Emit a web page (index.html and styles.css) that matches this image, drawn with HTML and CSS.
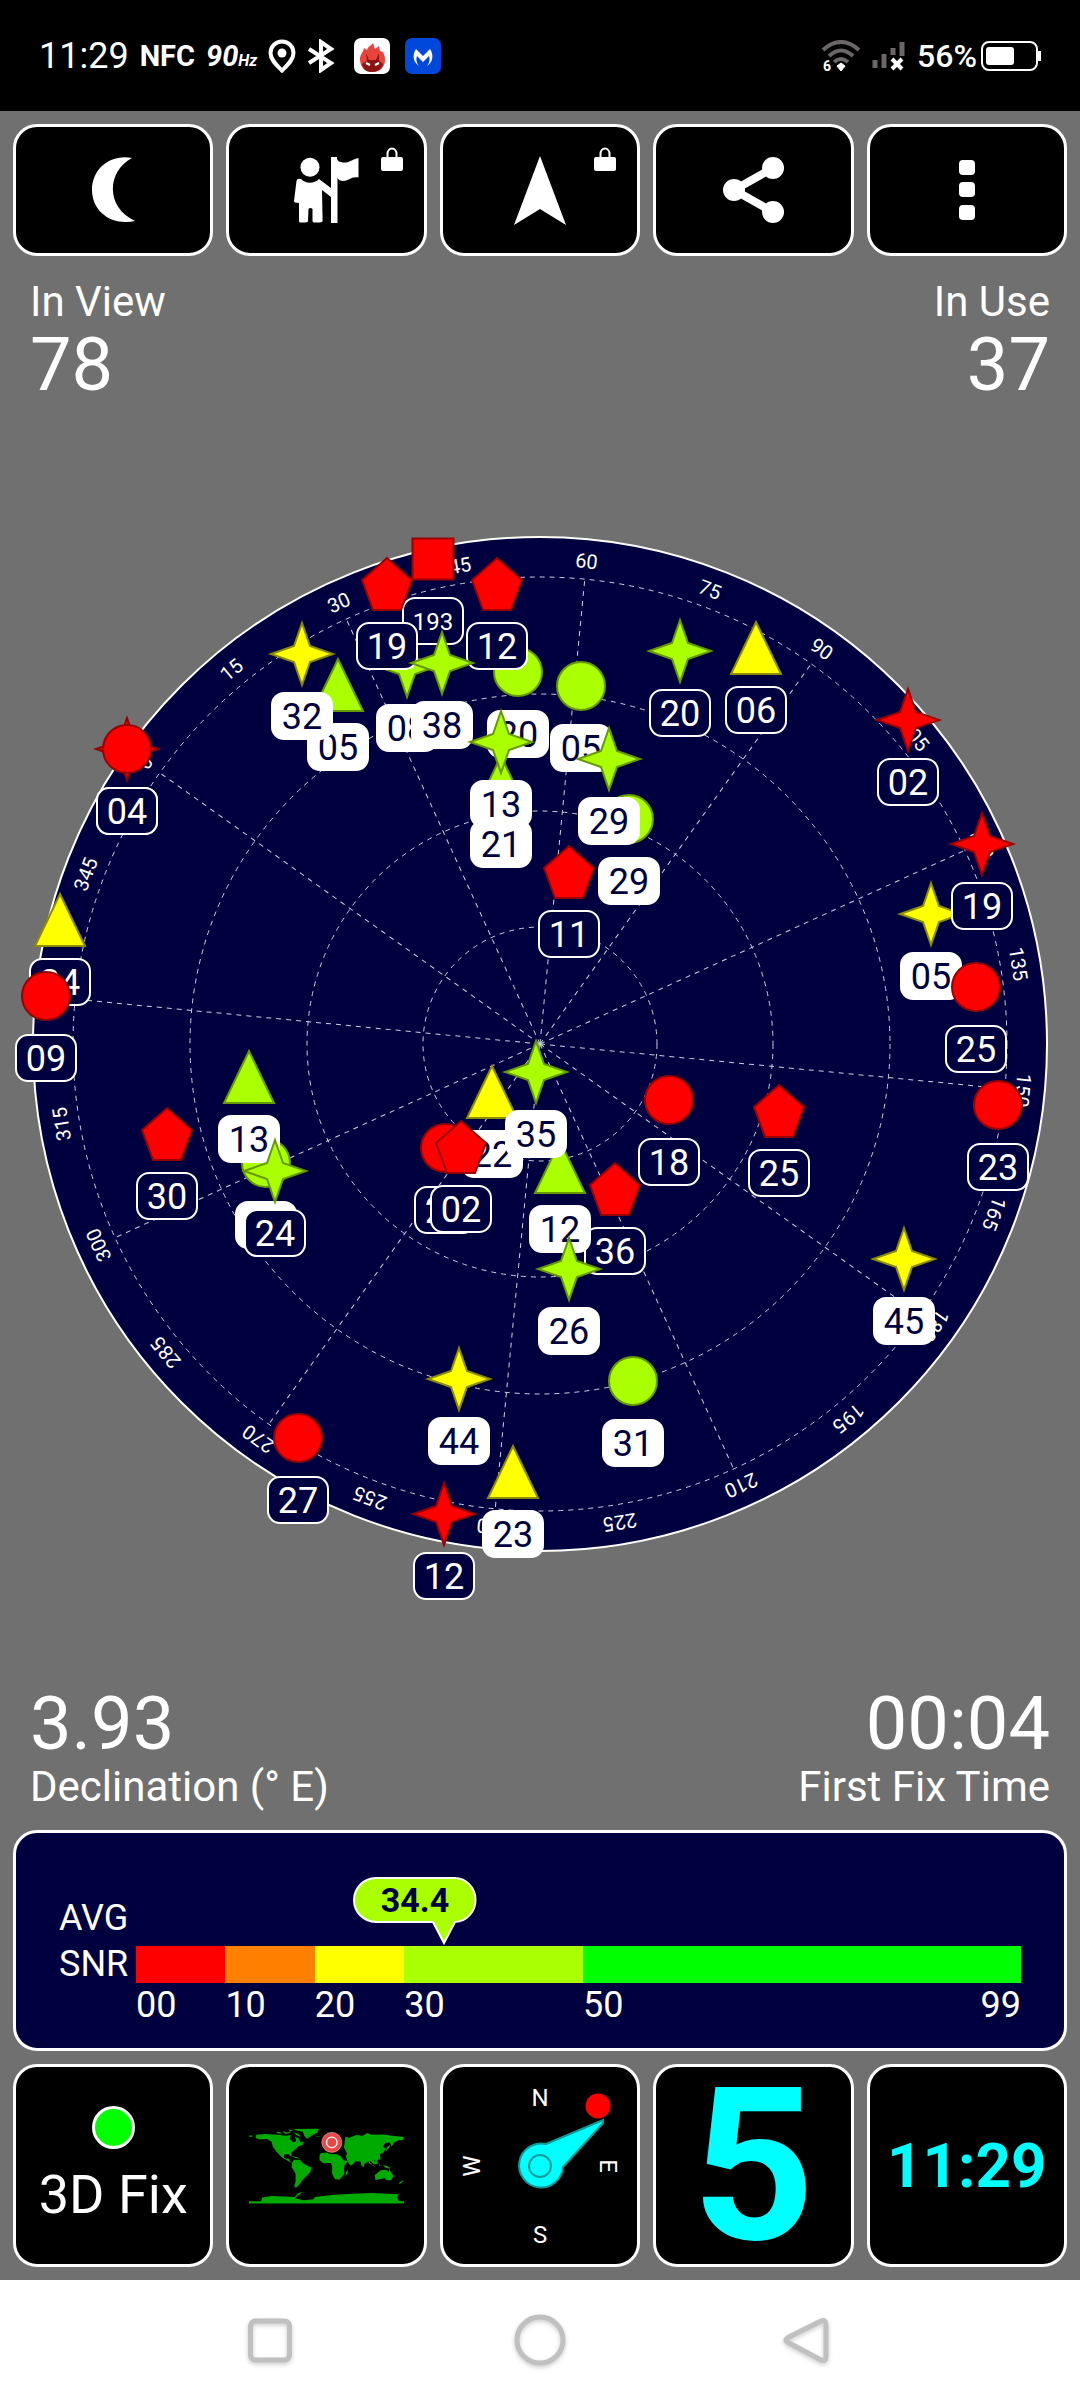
FILE: index.html
```html
<!DOCTYPE html>
<html lang="en">
<head>
    <meta charset="UTF-8">
    <meta name="viewport" content="width=device-width, initial-scale=1.0">
    <title>GPS Status</title>
    <link rel="stylesheet" href="styles.css">
</head>
<body>
    <header class="status-bar">
        <div class="status-group">
            <span class="clock">11:29</span>
            <span class="nfc">NFC</span>
            <span class="refresh">90<small>Hz</small></span>
            <svg class="status-icon" width="28" height="34" viewBox="0 0 28 34">
                <path d="M14 2.500C7.500 2.500 2.500 7.500 2.500 14c0 7 6.500 12.500 11.500 17.500 5-5 11.500-10.500 11.500-17.500C25.500 7.500 20.500 2.500 14 2.500Z" fill="none" stroke="#fff" stroke-width="4"/>
                <circle cx="14" cy="14" r="4.500" fill="#fff"/>
            </svg>
            <svg class="status-icon" width="28" height="34" viewBox="0 0 28 34">
                <path d="M2 10l22 14-10 7V3l10 7L2 24" fill="none" stroke="#fff" stroke-width="4"/>
            </svg>
            <svg class="app-badge" width="36" height="36" viewBox="0 0 36 36">
                <rect width="36" height="36" rx="7" fill="#fff"/>
                <path d="M18 34C10 34 6 28 6 21c0-5 3-6 4-11l3 2c1-4 4-4 6-7l2 6 4-3 1 5 3 1c2 4 2 5 2 8 0 7-5 12-13 12Z" fill="#e8443c"/>
                <path d="M12 15l3 7h7l3-7v8l4 3c-1 5-5 8-11 8S9 31 8 26l5-3Z" fill="#8a1512"/>
                <path d="M12 25l4 2M25 25l-4 2" stroke="#fff" stroke-width="2"/>
            </svg>
            <svg class="app-badge" width="36" height="36" viewBox="0 0 36 36">
                <rect width="36" height="36" rx="7" fill="#0048dc"/>
                <path d="M14 28C8 24 7 17 11 11l7 7 7-7c4 6 3 13-3 17 3-4 3-7 2-10l-6 6-6-6c-1 3-1 6 2 10Z" fill="#fff"/>
            </svg>
        </div>
        <div class="status-group">
            <svg width="40" height="32" viewBox="0 0 40 32">
                <path d="M2 10Q20-6 38 10M8 16Q20 5 32 16M13 22Q20 16 27 22" fill="none" stroke="#6b6668" stroke-width="4"/>
                <path d="M20 23l4 3-4 5-4-5Z" fill="#fff" stroke="#fff"/>
                <text class="wifi-gen" x="2" y="31">6</text>
            </svg>
            <svg width="34" height="30" viewBox="0 0 34 30">
                <path d="M3 19v8M12 13v14M21 7v7M30 1v14" stroke="#6b6668" stroke-width="5"/>
                <path d="M20 18l10 10M30 18L20 28" stroke="#fff" stroke-width="4"/>
            </svg>
            <span class="battery">56%
                <svg width="60" height="30" viewBox="0 0 60 30">
                    <rect x="1" y="1" width="55" height="28" rx="7" fill="none" stroke="#fff" stroke-width="2"/>
                    <rect x="5" y="6" width="28" height="18" rx="3" fill="#fff"/>
                    <rect x="57" y="10" width="3" height="10" fill="#fff"/>
                </svg>
            </span>
        </div>
    </header>

    <main class="app">
        <div class="tiles toolbar">
            <button class="tile" aria-label="Night mode">
                <svg width="43" height="66" viewBox="0 0 43 66"><path d="M40 1C18-3 0 12 0 33c0 22 20 36 43 31C14 51 14 15 40 1Z"/></svg>
            </button>
            <button class="tile" aria-label="Waypoints">
                <svg width="65" height="66" viewBox="0 0 65 66">
                    <circle cx="16" cy="10.300" r="9.500"/>
                    <path d="M2.500 24Q3 21 7 22C12 27 20 27 25 22L37 31V40L28 33 28.600 64Q28 66 20 65.500 18.500 65 18.500 64V52Q16.500 50 14.500 52L14 64Q14 66 6 65.500 5 65 5 64V46L1 45.500Q0 45 0 44Z"/>
                    <path d="M37 0H43V2Q44 5 49 5.500C56 6 59 2 64.500 1V20.500C57 19 55 24 49 24Q45 24 43.500 21V66H37Z"/>
                </svg>
                <svg class="lock" width="22" height="24" viewBox="0 0 22 24"><path d="M6.500 11V7a4.500 5.500 0 0 1 9 0v4" fill="none" stroke="#fff" stroke-width="2"/><rect y="10" width="22" height="14" rx="2"/></svg>
            </button>
            <button class="tile" aria-label="Navigate">
                <svg width="52" height="69" viewBox="0 0 52 69"><path d="M26 0L52 69 26 53 0 69Z"/></svg>
                <svg class="lock" width="22" height="24" viewBox="0 0 22 24"><path d="M6.500 11V7a4.500 5.500 0 0 1 9 0v4" fill="none" stroke="#fff" stroke-width="2"/><rect y="10" width="22" height="14" rx="2"/></svg>
            </button>
            <button class="tile" aria-label="Share">
                <svg width="61" height="66" viewBox="0 0 61 66">
                    <path d="M50 11L11 33l39 22" fill="none" stroke="#fff" stroke-width="8"/>
                    <circle cx="11" cy="33" r="11"/><circle cx="50" cy="11" r="11"/><circle cx="50" cy="55" r="11"/>
                </svg>
            </button>
            <button class="tile" aria-label="Menu">
                <svg width="16" height="60" viewBox="0 0 16 60"><rect width="16" height="15" rx="4"/><rect y="22" width="16" height="15" rx="4"/><rect y="45" width="16" height="15" rx="4"/></svg>
            </button>
        </div>

        <div class="stats stats-top">
            <div class="stat">
                <span class="stat-label">In View</span>
                <span class="stat-value">78</span>
            </div>
            <div class="stat stat-right">
                <span class="stat-label">In Use</span>
                <span class="stat-value">37</span>
            </div>
        </div>

        <!-- Sky plot, filled in by sky.js -->
        <div class="sky">
            <svg class="sky-plot" viewBox="0 1 1080 1120" role="img" aria-label="Satellite positions">
                <defs>
                    <circle id="circle" r="24"/>
                    <path id="star" d="M0-31L8-8 31 0 8 8 0 31-8 8-31 0-8-8Z"/>
                    <path id="triangle" d="M0-26L25 26H-25Z"/>
                    <path id="pentagon" d="M0-26L25-4 14 26H-14L-25-4Z"/>
                    <path id="square" d="M-20.500-20.500H20.500V20.500H-20.500Z"/>
                </defs>
                <circle class="dial" cx="540" cy="560" r="507"/>
                <g id="grid" transform="translate(540 560)"></g>
                <g id="sats"></g>
            </svg>
        </div>

        <div class="stats">
            <div class="stat">
                <span class="stat-value">3.93</span>
                <span class="stat-label">Declination (° E)</span>
            </div>
            <div class="stat stat-right">
                <span class="stat-value">00:04</span>
                <span class="stat-label">First Fix Time</span>
            </div>
        </div>

        <section class="snr">
            <span class="snr-name">AVG</span>
            <div></div>
            <span class="snr-name">SNR</span>
            <div class="snr-bar">
                <i class="poor"></i><i class="weak"></i><i class="fair"></i><i class="good"></i><i class="best"></i>
                <svg class="snr-bubble" style="left: 34.75%" width="126" height="70" viewBox="0 0 126 70">
                    <path d="M24 2H102A21 22 0 0 1 103 46L92 67 81 46H24A22 22 0 0 1 24 2Z" fill="#aaff00" stroke="#fff" stroke-width="2"/>
                    <text x="63" y="36">34.4</text>
                </svg>
            </div>
            <div></div>
            <div class="snr-scale">
                <span>00</span><span>10</span><span>20</span><span>30</span><span class="scale-end"><b>50</b><b>99</b></span>
            </div>
        </section>

        <div class="tiles widgets">
            <button class="tile fix">
                <span class="fix-dot"></span>
                <span>3D Fix</span>
            </button>
            <button class="tile" aria-label="Map">
                <svg class="map" width="155" height="76" viewBox="12 11 466 228">
                    <path fill="#00aa00" d="M12 33h10v4H12ZM34 31L60 29 100 31 122 34 138 32 134 44 146 54 154 50 150 38 160 40 166 52 176 60 160 66 148 78 140 84 140 98 132 90 118 90 116 98 124 104 130 102 138 114 146 118 140 116 112 100 96 84 84 68 80 52 66 44 44 45 32 41ZM145 14L222 13 218 24 200 34 186 43 178 34 174 22 160 20ZM96 22l12 2v4l-14-2ZM112 20l14 4 10-2v4l-14 3ZM130 15l14 2-8 4ZM146 24l14 4 8 10-14-6ZM170 50l8 5-8 4ZM138 96l16 2 12 5-14-2ZM214 36h10v2h-10Z"/>
                    <path fill="#00aa00" d="M148 106L164 106 176 118 200 130 196 144 184 156 172 168 164 180 154 190 148 188 152 170 152 148 140 128 142 114ZM228 86L262 84 286 94 296 108 309 110 298 126 298 150 284 166 270 164 262 148 262 126 258 116 236 117 224 108 224 94ZM304 142l6-5-2 12-6 6Z"/>
                    <path fill="#00aa00" d="M296 66l4-18 2-10 12 2 20-8 20 2 14-8 12 5 34-1 22 3 41 5v8l-18 2-10 6-8 12-6-12-14 2-6 10 8 8-8 12-10 4 2 10-10 10-10-2 6 14-8-4-8-8-8 2-10 6-2 10-6-2-4-14-16-2-2 6-12 8-8-12-6-16 4-8ZM426 70l10-10-2 10-10 10ZM370 106l12 16 12 4h-8l-14-10ZM386 112l10-4 4 10-10 2ZM402 98l6 8-4 2ZM404 116l4 10-4-1ZM414 122l14 3 10 8-14-2ZM390 152L408 138 424 136 432 142 434 134 446 154 440 168 426 168 420 162 392 167ZM462 177l12-9v4l-8 7Z"/>
                    <path fill="#00aa00" d="M12 231H48L52 220 80 215 150 218 160 206 174 203 160 214 150 222 176 228 206 225 210 218 260 212 310 209 380 206 462 210 458 218 462 230 478 231V238H12Z"/>
                    <circle cx="265" cy="56" r="34"/>
                    <circle cx="261" cy="54" r="30" fill="#e84848" stroke="#f0a8a0" stroke-width="2"/>
                    <circle cx="261" cy="54" r="16" fill="none" stroke="#fff" stroke-width="4"/>
                </svg>
            </button>
            <button class="tile" aria-label="Compass">
                <svg class="compass" width="190" height="190" viewBox="-95 -95 190 190">
                    <text y="-60">N</text>
                    <text transform="rotate(90)" y="-60">E</text>
                    <text y="77">S</text>
                    <text transform="rotate(-90)" y="-60">W</text>
                    <path d="M6-22L63-46V-43L23 1A22 22 0 1 1 6-22Z" fill="#0ff" stroke="#0a9a9a" stroke-width="2"/>
                    <circle r="11" fill="#0ff" stroke="#0a9a9a" stroke-width="2"/>
                    <circle cx="58" cy="-60" r="12.500" fill="#f00"/>
                </svg>
            </button>
            <button class="tile speed">5</button>
            <button class="tile time">11:29</button>
        </div>
    </main>

    <nav class="nav-bar">
        <button aria-label="Recent apps"><svg width="54" height="60" viewBox="0 0 54 60"><rect x="7.500" y="11" width="39" height="39" rx="5"/></svg></button>
        <button aria-label="Home"><svg width="54" height="60" viewBox="0 0 54 60"><circle cx="27" cy="30" r="23"/></svg></button>
        <button aria-label="Back"><svg width="54" height="60" viewBox="0 0 54 60"><path d="M38 11L6 27Q0 30 6 33L38 50Q43 52 43 46V15Q43 9 38 11Z"/></svg></button>
    </nav>

    <script src="sky.js"></script>
</body>
</html>
```
FILE: sky.js
```js
const NS = "http://www.w3.org/2000/svg";
const HEADING = 54.5;

// [shape, signal, x, y, id, used in fix], lowest first
const satellites = [
    ["star", "lime", 407, 182, "08", true],
    ["square", "red", 433, 75, "193", false],
    ["pentagon", "red", 387, 100, "19", false],
    ["circle", "lime", 518, 188, "20", true],
    ["pentagon", "red", 497, 100, "12", false],
    ["triangle", "lime", 338, 201, "05", true],
    ["star", "yellow", 302, 170, "32", true],
    ["star", "lime", 442, 179, "38", true],
    ["triangle", "lime", 501, 298, "21", true],
    ["star", "lime", 501, 258, "13", true],
    ["star", "red", 127, 265, "04", false],
    ["circle", "red", 127, 265, "04", false],
    ["triangle", "yellow", 60, 436, "24", false],
    ["circle", "red", 46, 512, "09", false],
    ["circle", "lime", 581, 202, "05", true],
    ["star", "lime", 680, 167, "20", false],
    ["triangle", "yellow", 756, 164, "06", false],
    ["circle", "lime", 629, 335, "29", true],
    ["star", "lime", 609, 275, "29", true],
    ["pentagon", "red", 569, 388, "11", false],
    ["star", "red", 908, 236, "02", false],
    ["star", "yellow", 931, 430, "05", true],
    ["star", "red", 982, 360, "19", false],
    ["circle", "red", 976, 503, "25", false],
    ["circle", "red", 998, 621, "23", false],
    ["circle", "lime", 266, 679, "31", true],
    ["triangle", "lime", 249, 593, "13", true],
    ["star", "lime", 275, 687, "24", false],
    ["pentagon", "red", 167, 650, "30", false],
    ["triangle", "yellow", 492, 608, "22", true],
    ["circle", "red", 445, 664, "28", false],
    ["pentagon", "red", 461, 663, "02", false],
    ["pentagon", "red", 615, 705, "36", false],
    ["triangle", "lime", 560, 683, "12", true],
    ["star", "lime", 536, 588, "35", true],
    ["star", "lime", 569, 785, "26", true],
    ["circle", "red", 669, 616, "18", false],
    ["pentagon", "red", 779, 627, "25", false],
    ["star", "yellow", 904, 775, "45", true],
    ["circle", "lime", 633, 897, "31", true],
    ["star", "yellow", 459, 895, "44", true],
    ["circle", "red", 298, 954, "27", false],
    ["star", "red", 444, 1030, "12", false],
    ["triangle", "yellow", 513, 988, "23", true]
];

function add(parent, tag, attrs, text) {
    const el = document.createElementNS(NS, tag);
    for (const key in attrs) el.setAttribute(key, attrs[key]);
    if (text) el.textContent = text;
    parent.appendChild(el);
    return el;
}

function drawGrid() {
    const grid = document.getElementById("grid");
    [117, 233, 350, 467].forEach(r => add(grid, "circle", { class: "ring", r }));

    for (let az = 0; az < 360; az += 15) {
        const g = add(grid, "g", { transform: `rotate(${az - HEADING})` });
        if (az % 30 === 0) add(g, "path", { class: "spoke", d: "M0 0V-467" });
        add(g, "text", { class: "azimuth", y: -478 }, String(az));
    }
}

function drawSatellites() {
    const layer = document.getElementById("sats");
    satellites.forEach(([shape, signal, x, y, id, used]) => {
        const g = add(layer, "g", {
            class: `sat ${signal} ${used ? "used" : ""}`,
            transform: `translate(${x} ${y})`
        });
        add(g, "use", { href: "#" + shape });
        add(g, "rect", { x: -30, y: 39, width: 60, height: 46, rx: 12 });
        add(g, "text", { class: id.length > 2 ? "small" : "", y: id.length > 2 ? 71 : 75 }, id);
    });
}

drawGrid();
drawSatellites();
```
FILE: styles.css
```css
:root {
    --background: #707070;
    --navy: #000040;
    --cyan: #00ffff;
    --gap: 13px;
}

* {
    box-sizing: border-box;
}

body {
    margin: 0;
    min-height: 100vh;
    display: flex;
    flex-direction: column;
    background: var(--background);
    color: #fff;
    font-family: Roboto, "Liberation Sans", sans-serif;
    font-size: 36px;
}

button {
    font-family: inherit;
    color: inherit;
    cursor: pointer;
}

svg {
    display: block;
    flex: none;
}

/* Status bar */
.status-bar {
    display: flex;
    justify-content: space-between;
    align-items: center;
    height: 111px;
    padding: 0 39px;
    background: #000;
}

.status-group {
    display: flex;
    align-items: center;
    gap: 11px;
}

.nfc {
    font-size: 29px;
    font-weight: 700;
}

.refresh {
    font-size: 29px;
    font-weight: 700;
    font-style: italic;
}

.refresh small {
    font-size: 16px;
}

.app-badge {
    margin-left: 4px;
}

.status-icon + .app-badge {
    margin-left: 8px;
}

.wifi-gen {
    fill: #fff;
    font-size: 14px;
    font-weight: 700;
}

.battery {
    display: flex;
    align-items: center;
    gap: 4px;
    font-size: 32px;
    font-weight: 500;
}

/* Main screen */
.app {
    flex: 1;
    display: flex;
    flex-direction: column;
    padding: var(--gap);
}

.tiles {
    display: grid;
    grid-template-columns: repeat(5, 1fr);
    gap: var(--gap);
}

.tile {
    position: relative;
    display: flex;
    align-items: center;
    justify-content: center;
    min-width: 0;
    padding: 0;
    background: #000;
    border: 3px solid #fff;
    border-radius: 24px;
}

.toolbar .tile {
    height: 132px;
}

.toolbar svg {
    fill: #fff;
}

.lock {
    position: absolute;
    top: 20px;
    right: 21px;
}

.stats {
    display: flex;
    justify-content: space-between;
    padding: 0 17px;
}

.stats-top {
    margin-top: 20px;
}

.stat {
    display: flex;
    flex-direction: column;
}

.stat-right {
    text-align: right;
}

.stat-label {
    font-size: 42px;
    line-height: 52px;
}

.stat-value {
    font-size: 74px;
    line-height: 74px;
}

/* Sky plot */
.sky {
    flex: 1;
    display: flex;
    align-items: center;
    margin: 0 -13px;
}

.sky-plot {
    width: 100%;
    flex: auto;
    overflow: visible;
}

.dial {
    fill: var(--navy);
    stroke: #fff;
    stroke-width: 2;
}

.ring,
.spoke {
    fill: none;
    stroke: #d0d0e0;
    stroke-dasharray: 5 5;
}

.azimuth {
    fill: #fff;
    font-size: 20px;
    text-anchor: middle;
}

.sat use {
    stroke-width: 2;
}

.red use {
    fill: #ff0000;
    stroke: #990000;
}

.yellow use {
    fill: #ffff00;
    stroke: #8c8c00;
}

.lime use {
    fill: #aaff00;
    stroke: #669900;
}

.sat rect {
    fill: var(--navy);
    stroke: #fff;
    stroke-width: 2;
}

.sat text {
    fill: #fff;
    font-size: 36px;
    text-anchor: middle;
}

.sat .small {
    font-size: 24px;
}

.used rect {
    fill: #fff;
}

.used text {
    fill: var(--navy);
}

/* Average signal to noise ratio */
.snr {
    display: grid;
    grid-template-columns: 77px 1fr;
    grid-template-rows: 46px 46px 36px;
    align-items: center;
    margin: 17px 0 var(--gap);
    padding: 62px 43px 25px;
    background: var(--navy);
    border: 3px solid #fff;
    border-radius: 24px;
}

.snr-name {
    line-height: 46px;
}

.snr-bar,
.snr-scale {
    position: relative;
    display: grid;
    grid-template-columns: 10fr 10fr 10fr 20fr 49fr;
}

.snr-bar {
    height: 37px;
}

.snr-scale {
    line-height: 36px;
}

.scale-end {
    display: flex;
    justify-content: space-between;
}

.scale-end b {
    font-weight: 400;
}

.poor { background: #ff0000; }
.weak { background: #ff8000; }
.fair { background: #ffff00; }
.good { background: #aaff00; }
.best { background: #00ff00; }

.snr-bubble {
    position: absolute;
    bottom: 100%;
    margin-left: -92px;
}

.snr-bubble text {
    fill: var(--navy);
    font-size: 34px;
    font-weight: 700;
    text-anchor: middle;
}

/* Bottom widgets */
.widgets .tile {
    height: 203px;
}

.fix {
    flex-direction: column;
    gap: 16px;
    font-size: 54px;
    line-height: 60px;
}

.fix-dot {
    width: 43px;
    height: 43px;
    background: #00ff00;
    border: 3px solid #fff;
    border-radius: 50%;
}

.compass text {
    fill: #fff;
    font-size: 24px;
    text-anchor: middle;
}

.speed {
    color: var(--cyan);
    font-size: 214px;
    font-weight: 700;
    line-height: 197px;
}

.time {
    color: var(--cyan);
    font-size: 62px;
    font-weight: 700;
}

/* Android navigation */
.nav-bar {
    display: flex;
    justify-content: center;
    height: 120px;
    background: #fff;
}

.nav-bar button {
    width: 25%;
    display: flex;
    align-items: center;
    justify-content: center;
    padding: 0;
    background: none;
    border: 0;
}

.nav-bar svg {
    fill: none;
    stroke: #c0c0c0;
    stroke-width: 5;
    filter: drop-shadow(0 2px 2px #cccccc);
}
```
